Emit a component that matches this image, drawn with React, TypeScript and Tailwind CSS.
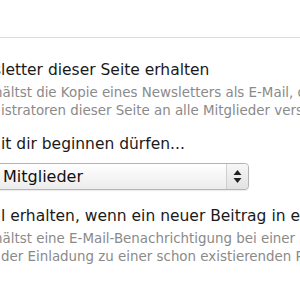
export default function App() {
    return (
        <div className="w-[300px] h-[300px] overflow-hidden bg-white font-['DejaVu_Sans',sans-serif] whitespace-nowrap">
            <div className="h-[37px]" />
            <div className="h-px w-full bg-[#dddddd]" />

            <div className="mt-[22px] -ml-[7px] text-[15.5px] leading-[20px] text-[#1a1a1a]">
                sletter dieser Seite erhalten
            </div>
            <div className="mt-[4px] text-[13.4px] leading-[18px] text-[#8a8a8a]">
                <div className="-ml-[6px]">hältst die Kopie eines Newsletters als E-Mail, den die</div>
                <div className="ml-[1px]">istratoren dieser Seite an alle Mitglieder versenden.</div>
            </div>

            <div className="mt-[14px] ml-[1px] text-[15.5px] leading-[20px] text-[#1a1a1a]">
                it dir beginnen dürfen...
            </div>

            <div className="mt-[9px] -ml-[8px] w-[257px] h-[27px] flex items-stretch rounded-[4px] border border-[#b4b4b4] bg-gradient-to-b from-white to-[#ececec] shadow-[0_1px_1px_rgba(0,0,0,0.08)]">
                <div className="flex-1 flex items-center pl-[10px] text-[16px] text-[#111111]">Mitglieder</div>
                <div className="w-[22px] flex items-center justify-center border-l border-[#cfcfcf] bg-gradient-to-b from-[#f7f7f7] to-[#e2e2e2] rounded-r-[4px]">
                    <svg width="9" height="15" viewBox="0 0 9 15">
                        <path d="M4.5 1 L8.5 6 L0.5 6 Z" fill="#222" />
                        <path d="M4.5 14 L8.5 9 L0.5 9 Z" fill="#222" />
                    </svg>
                </div>
            </div>

            <div className="mt-[16px] ml-[1px] text-[15.5px] leading-[20px] text-[#1a1a1a]">
                l erhalten, wenn ein neuer Beitrag in einem
            </div>
            <div className="mt-[4px] text-[13.4px] leading-[18px] text-[#8a8a8a]">
                <div className="-ml-[6px]">hältst eine E-Mail-Benachrichtigung bei einer neuen</div>
                <div className="ml-[1px]">der Einladung zu einer schon existierenden Pinnwand.</div>
            </div>

            <div className="mt-[35px] ml-[2px] text-[16px] leading-[20px] text-[#cccccc]">
                Inhalte teilen
            </div>
        </div>
    )
}
